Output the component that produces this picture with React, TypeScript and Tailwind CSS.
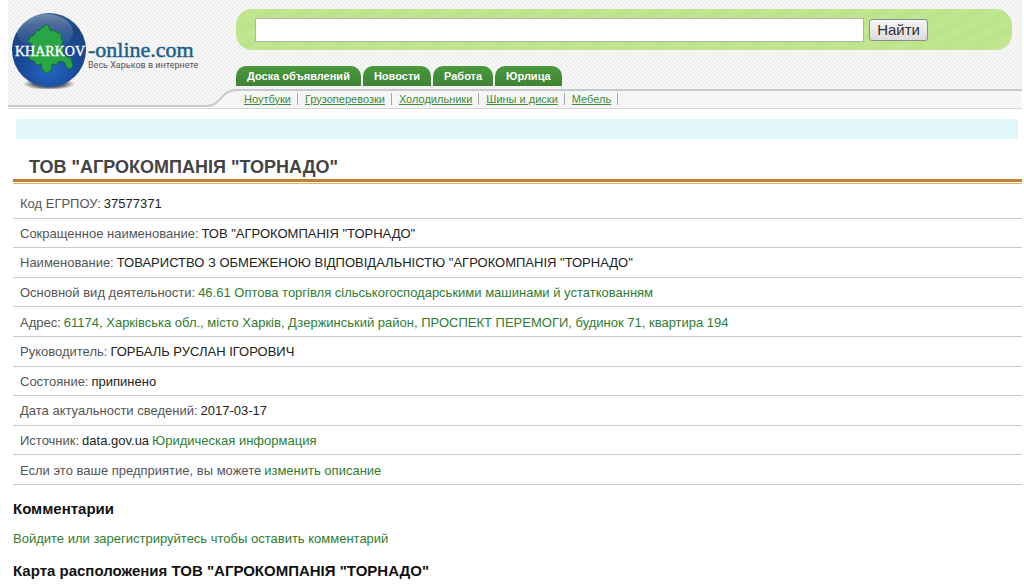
import React from 'react';

interface DetailRow {
  label: string;
  value?: string;
  link?: string;
}

const tabs = ['Доска объявлений', 'Новости', 'Работа', 'Юрлица'];

const sections = ['Ноутбуки', 'Грузоперевозки', 'Холодильники', 'Шины и диски', 'Мебель'];

const rows: DetailRow[] = [
  { label: 'Код ЕГРПОУ:', value: '37577371' },
  { label: 'Сокращенное наименование:', value: 'ТОВ "АГРОКОМПАНІЯ "ТОРНАДО"' },
  { label: 'Наименование:', value: 'ТОВАРИСТВО З ОБМЕЖЕНОЮ ВІДПОВІДАЛЬНІСТЮ "АГРОКОМПАНІЯ "ТОРНАДО"' },
  { label: 'Основной вид деятельности:', link: '46.61 Оптова торгівля сільськогосподарськими машинами й устаткованням' },
  { label: 'Адрес:', link: '61174, Харківська обл., місто Харків, Дзержинський район, ПРОСПЕКТ ПЕРЕМОГИ, будинок 71, квартира 194' },
  { label: 'Руководитель:', value: 'ГОРБАЛЬ РУСЛАН ІГОРОВИЧ' },
  { label: 'Состояние:', value: 'припинено' },
  { label: 'Дата актуальности сведений:', value: '2017-03-17' },
  { label: 'Источник:', value: 'data.gov.ua', link: 'Юридическая информация' },
  { label: 'Если это ваше предприятие, вы можете', link: 'изменить описание' },
];

function Logo() {
  return (
    <svg width="228" height="89" viewBox="8 0 228 89" role="img" aria-label="Kharkov-online.com">
      <defs>
        <radialGradient id="globe" cx="0.5" cy="0.75" r="0.75">
          <stop offset="0" stopColor="#2468c4" />
          <stop offset="0.5" stopColor="#1b489a" />
          <stop offset="0.85" stopColor="#1a4380" />
          <stop offset="1" stopColor="#35608f" />
        </radialGradient>
        <linearGradient id="shine" x1="0" y1="0" x2="0" y2="1">
          <stop offset="0" stopColor="#fff" stopOpacity="0.3" />
          <stop offset="1" stopColor="#fff" stopOpacity="0" />
        </linearGradient>
        <radialGradient id="shadow">
          <stop offset="0" stopColor="#222" stopOpacity="1" />
          <stop offset="0.6" stopColor="#333" stopOpacity="0.7" />
          <stop offset="1" stopColor="#333" stopOpacity="0" />
        </radialGradient>
      </defs>
      <ellipse cx="49" cy="84" rx="26" ry="6" fill="url(#shadow)" />
      <circle cx="49" cy="50" r="37" fill="url(#globe)" />
      <ellipse cx="45" cy="32" rx="28" ry="18" fill="url(#shine)" />
      <path
        d="M41 27 L44 27 L46 24 L49 26 L50 30 L55 31 L58 33 L62 34 L61 38 L63 42 L61 46 L64 49 L63 54 L67 57 L71 58 L72 62 L73 66 L70 69 L66 67 L65 63 L61 61 L58 62 L56 65 L52 64 L51 71 L46 73 L42 70 L41 64 L36 65 L34 61 L30 60 L28 56 L33 52 L31 48 L32 44 L28 42 L30 37 L34 35 L36 31 L40 30 Z"
        fill="#2aa545"
        stroke="#17693a"
        strokeWidth="1"
      />
      <text x="15" y="56" fontSize="14" fill="#fff" stroke="#fff" strokeWidth="0.3" fontFamily="Liberation Serif, serif">KHARKOV</text>
      <text x="88" y="57" fontSize="22" fill="#1f5f8b" stroke="#1f5f8b" strokeWidth="0.5" fontFamily="Liberation Serif, serif">-online.com</text>
      <text x="88" y="68" fontSize="9" fill="#555" fontFamily="Roboto, sans-serif">Весь Харьков в интернете</text>
    </svg>
  );
}

function Header() {
  return (
    <header className="mr-[2px] ml-2 flex bg-[#f2f2f3] bg-[repeating-conic-gradient(#ffffff66_0_25%,#ebebeb66_0_50%)] bg-[length:4px_4px]">
      <div className="flex w-[228px] shrink-0 flex-col justify-between">
        <a href="#"><Logo /></a>
        {/* Curve that joins the header edge to the section bar */}
        <svg className="block h-5 w-full" viewBox="0 0 228 20" fill="none">
          <path d="M0 17 H198 C214 17 212 1 229 1 V20 H0 Z" fill="#f6f6f7" />
          <path d="M0 17 H198 C214 17 212 1 229 1" stroke="#c6c9ce" strokeWidth="2" />
          <path d="M0 19.500 H228" stroke="#dadada" />
        </svg>
      </div>

      <div className="min-w-0 flex-1">
        <form className="mt-[9px] mr-[10px] flex h-[41px] items-center gap-[5px] rounded-2xl bg-[#bde58c] bg-[repeating-linear-gradient(150deg,#bce48b_0_8px,#c0e790_8px_16px)] pr-[84px] pl-[19px]">
          <input type="text" aria-label="Поиск" className="h-6 min-w-0 flex-1 border border-[#b4b4a8] bg-white px-1 text-sm outline-none" />
          <button type="button" className="h-[22px] rounded-[3px] border border-[#8c8c8c] bg-linear-to-b from-[#f6f6f6] to-[#dcdcdc] px-[7px] text-[15px] leading-5 text-[#333]">Найти</button>
        </form>

        <nav className="mt-4 flex gap-[2px]">
          {tabs.map(tab => (
            <a key={tab} href="#" className="h-5 rounded-t-[10px] bg-linear-to-b from-[#4a9a3c] to-[#3f8334] px-[11px] text-[11px] leading-5 font-bold whitespace-nowrap text-white">{tab}</a>
          ))}
        </nav>

        <nav className="mt-[3px] flex h-5 items-center border-t-2 border-b border-t-[#c3cad2] border-b-[#d4d4d4] bg-[#f6f6f7] pb-[2px] pl-[2px] text-[11px] leading-3">
          {sections.map(section => (
            <span key={section} className="mr-px border-r border-[#aaa] px-[6px]">
              <a href="#" className="whitespace-nowrap text-[#3f8a34] underline">{section}</a>
            </span>
          ))}
        </nav>
      </div>
    </header>
  );
}

export default function App() {
  return (
    <div className="bg-white font-['Liberation_Sans',Arial,sans-serif] text-[13px] text-[#222]">
      <Header />

      <div className="mt-[10px] mr-[6px] ml-4 h-5 bg-[#e2f8f8]" />

      <main className="mr-[2px] ml-[13px]">
        <h1 className="mt-4 border-b-[3px] border-[#c0803a] pl-4 text-lg leading-6 font-bold text-[#444]">ТОВ "АГРОКОМПАНІЯ "ТОРНАДО"</h1>
        <div className="mt-px h-px bg-[#e8b650]" />

        <div className="mt-[5px] grid min-h-[296px] auto-rows-fr">
          {rows.map(row => (
            <p key={row.label} className="flex items-center gap-[3px] border-b border-[#ccc] pt-[2px] pl-[7px] leading-4">
              <span className="text-[#555]">{row.label}</span>
              {row.value && <span>{row.value}</span>}
              {row.link && <a href="#" className="text-[#2f7d32]">{row.link}</a>}
            </p>
          ))}
        </div>

        <h2 className="mt-[14px] text-[15px] leading-5 font-bold text-[#111]">Комментарии</h2>
        <p className="mt-3 leading-4">
          <a href="#" className="text-[#2f7d32]">Войдите или зарегистрируйтесь чтобы оставить комментарий</a>
        </p>
        <h2 className="mt-[14px] text-[15px] leading-5 font-bold text-[#111]">Карта расположения ТОВ "АГРОКОМПАНІЯ "ТОРНАДО"</h2>
      </main>
    </div>
  );
}
